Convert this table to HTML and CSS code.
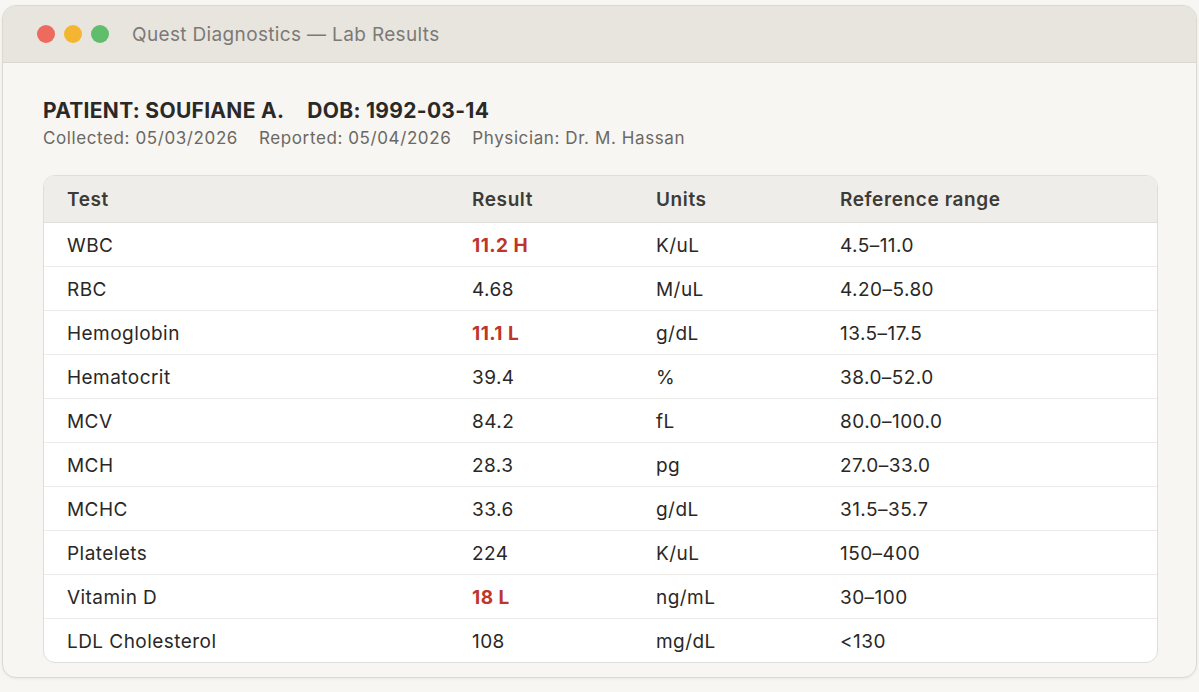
FILE: index.html
```html
<!DOCTYPE html>
<html>
<head>
<meta charset="utf-8">
<link rel="stylesheet" href="styles.css">
</head>
<body>
<div class="window">
  <div class="titlebar">
    <div class="lights">
      <span class="light red"></span>
      <span class="light yellow"></span>
      <span class="light green"></span>
    </div>
    <div class="title">Quest Diagnostics — Lab Results</div>
  </div>
  <div class="content">
    <div class="patient">
      <span>PATIENT: SOUFIANE A.</span>
      <span>DOB: 1992-03-14</span>
    </div>
    <div class="meta">
      <span>Collected: 05/03/2026</span>
      <span>Reported: 05/04/2026</span>
      <span>Physician: Dr. M. Hassan</span>
    </div>
    <div class="card">
      <div class="row head">
        <div>Test</div><div>Result</div><div>Units</div><div>Reference range</div>
      </div>
      <div class="row"><div>WBC</div><div class="flag">11.2 H</div><div>K/uL</div><div>4.5–11.0</div></div>
      <div class="row"><div>RBC</div><div>4.68</div><div>M/uL</div><div>4.20–5.80</div></div>
      <div class="row"><div>Hemoglobin</div><div class="flag">11.1 L</div><div>g/dL</div><div>13.5–17.5</div></div>
      <div class="row"><div>Hematocrit</div><div>39.4</div><div>%</div><div>38.0–52.0</div></div>
      <div class="row"><div>MCV</div><div>84.2</div><div>fL</div><div>80.0–100.0</div></div>
      <div class="row"><div>MCH</div><div>28.3</div><div>pg</div><div>27.0–33.0</div></div>
      <div class="row"><div>MCHC</div><div>33.6</div><div>g/dL</div><div>31.5–35.7</div></div>
      <div class="row"><div>Platelets</div><div>224</div><div>K/uL</div><div>150–400</div></div>
      <div class="row"><div>Vitamin D</div><div class="flag">18 L</div><div>ng/mL</div><div>30–100</div></div>
      <div class="row last"><div>LDL Cholesterol</div><div>108</div><div>mg/dL</div><div>&lt;130</div></div>
    </div>
  </div>
</div>
</body>
</html>
```
FILE: styles.css
```css
* { box-sizing: border-box; }
html, body { margin: 0; padding: 0; }
body {
  background: #f7f6f3;
  font-family: Inter, "Noto Sans", sans-serif;
  width: 1199px;
  height: 692px;
  overflow: hidden;
  padding: 5px 2px 0 2px;
}
.window {
  width: 1195px;
  height: 673px;
  border: 1px solid #dcd9d3;
  border-radius: 14px;
  background: #f7f6f2;
  overflow: hidden;
  box-shadow: 0 1px 3px rgba(0,0,0,0.06);
}
.titlebar {
  height: 57px;
  background: #e8e5df;
  border-bottom: 1px solid #dad7d1;
  display: flex;
  align-items: center;
  padding-left: 34px;
}
.lights { display: flex; gap: 9px; }
.light { width: 18px; height: 18px; border-radius: 50%; display: block; }
.red { background: #ec6a5e; }
.yellow { background: #f4b631; }
.green { background: #5fbd6c; }
.title {
  margin-left: 23px;
  font-size: 19px;
  color: #7d7975;
  letter-spacing: 0.35px;
}
.content { padding: 35px 38px 0 40px; }
.patient {
  font-size: 21px;
  line-height: 26px;
  font-weight: 700;
  color: #2b2927;
  display: flex;
  gap: 23px;
  letter-spacing: 0.3px;
}
.meta {
  margin-top: 3px;
  font-size: 17px;
  line-height: 22px;
  color: #6b6864;
  display: flex;
  gap: 21px;
  letter-spacing: 0.6px;
}
.card {
  margin-top: 26px;
  background: #ffffff;
  border: 1px solid #e0ddd8;
  border-radius: 12px;
  overflow: hidden;
}
.row {
  display: grid;
  grid-template-columns: 405px 184px 184px 1fr;
  height: 44px;
  align-items: center;
  padding-top: 2px;
  border-bottom: 1px solid #eeece8;
  font-size: 19px;
  letter-spacing: 0.45px;
  color: #2a2826;
}
.row > div { padding-left: 23px; }
.row.head {
  height: 47px;
  padding-top: 1px;
  background: #efede9;
  border-bottom: 1px solid #e2dfda;
  font-weight: 600;
  color: #3d3b38;
  letter-spacing: 0.6px;
}
.row.last { border-bottom: none; height: 43px; }
.flag { color: #c0342a; font-weight: 700; }
```
